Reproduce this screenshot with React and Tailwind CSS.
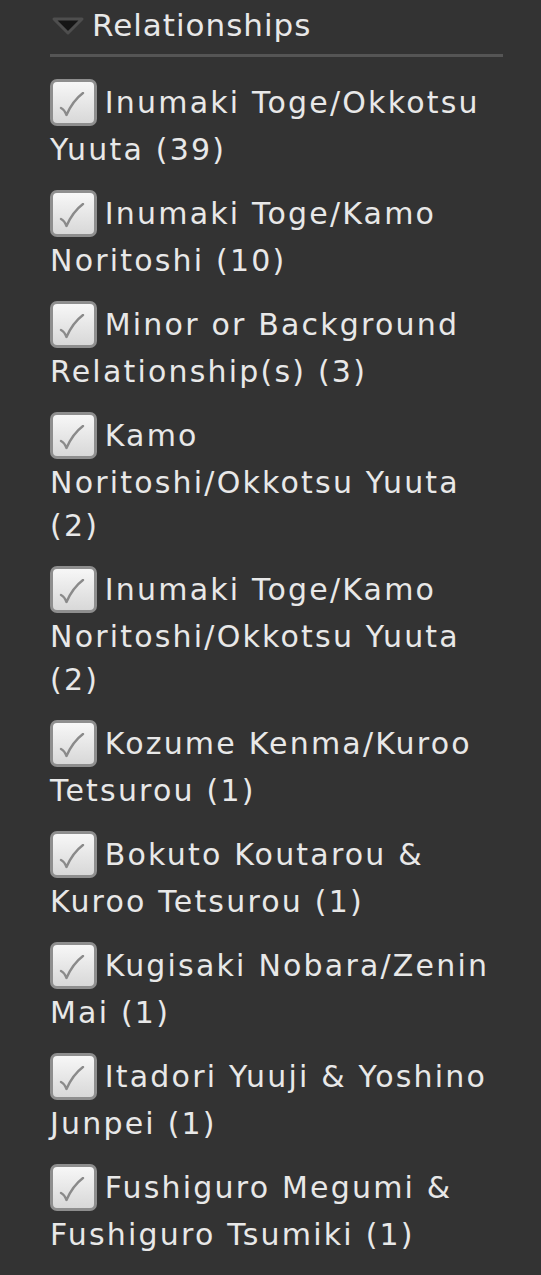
const relationships = [
  ["Inumaki Toge/Okkotsu Yuuta", 39],
  ["Inumaki Toge/Kamo Noritoshi", 10],
  ["Minor or Background Relationship(s)", 3],
  ["Kamo Noritoshi/Okkotsu Yuuta", 2],
  ["Inumaki Toge/Kamo Noritoshi/Okkotsu Yuuta", 2],
  ["Kozume Kenma/Kuroo Tetsurou", 1],
  ["Bokuto Koutarou & Kuroo Tetsurou", 1],
  ["Kugisaki Nobara/Zenin Mai", 1],
  ["Itadori Yuuji & Yoshino Junpei", 1],
  ["Fushiguro Megumi & Fushiguro Tsumiki", 1],
];

function CheckBox() {
  return (
    <span className="relative top-[-2px] mr-[-4px] inline-flex h-[47px] w-[47px] items-center justify-center rounded-[7px] border-[3px] border-[#8e8e8e] bg-gradient-to-b from-[#f7f7f7] to-[#d8d8d8] align-middle">
      <svg width="26" height="26" viewBox="0 0 26 26" className="ml-[-4px] mt-[4px]">
        <path
          d="M2 16 C4 17 6 19 7.5 23 C11 15 16 7 24 1"
          fill="none"
          stroke="#8a8a8a"
          strokeWidth="2.4"
          strokeLinecap="round"
          strokeLinejoin="round"
        />
      </svg>
    </span>
  );
}

export default function App() {
  return (
    <div className="min-h-[1275px] bg-[#333333] pl-[50px] pr-[38px] pt-[6px] font-['DejaVu_Sans',sans-serif] text-[#e8e8e8]">
      {/* Header */}
      <div className="flex items-center gap-[7px] border-b-[3px] border-[#555555] pb-[10px]">
        <svg width="34" height="20" viewBox="0 0 34 20" className="ml-[1px] mt-[2px]">
          <path d="M3 3 L31 3 L17 17 Z" fill="#151515" stroke="#4e4e4e" strokeWidth="3" strokeLinejoin="round" />
        </svg>
        <span className="text-[31px] leading-[38px] tracking-[1px]">Relationships</span>
      </div>

      {/* List */}
      <ul className="pt-[24px]">
        {relationships.map(([name, count]) => (
          <li key={name} className="mb-[21px] text-[30px] leading-[43px] tracking-[2.2px]">
            <CheckBox /> {name} ({count})
          </li>
        ))}
      </ul>
    </div>
  );
}
